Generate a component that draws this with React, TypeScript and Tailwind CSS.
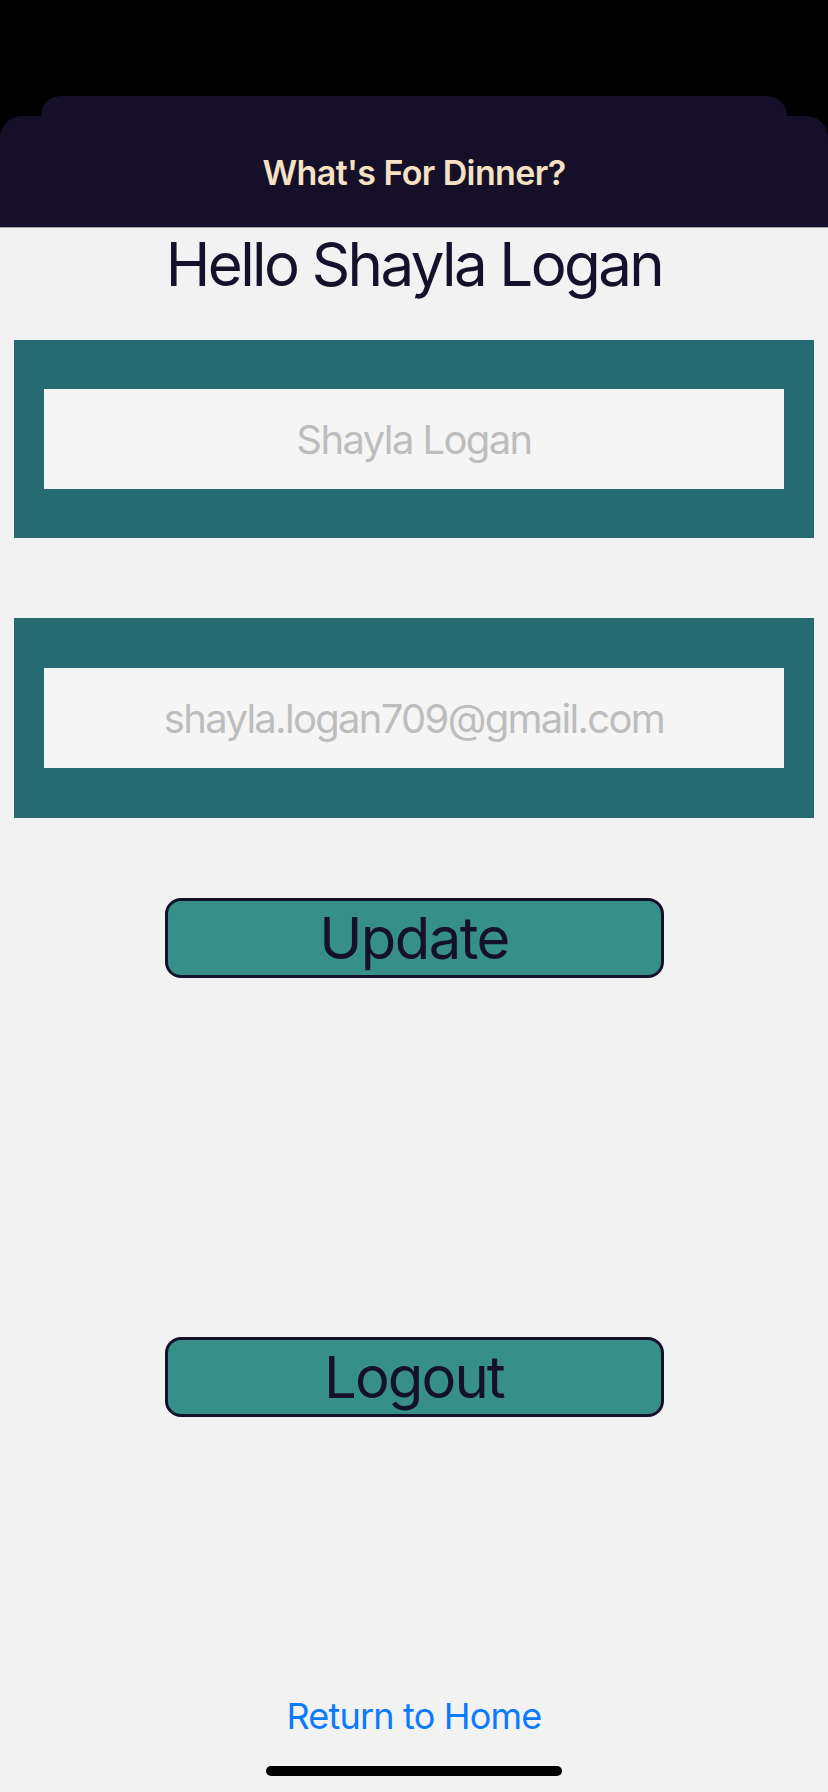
export default function App() {
  return (
    <div className="min-h-[1792px] w-[828px] bg-[#f2f2f2] flex flex-col font-['Inter',sans-serif]">
      {/* header with stacked sheet */}
      <div className="bg-black pt-[96px]">
        <div className="mx-[41px] h-[20px] rounded-t-[20px] bg-[#150f2a]" />
        <div className="h-[112px] rounded-t-[22px] bg-[#150f2a] border-b border-[#a6a6ad] flex items-center justify-center">
          <span className="text-[34px] font-semibold text-[#f6e1c3] tracking-[-0.6px] mt-[1px]">What's For Dinner?</span>
        </div>
      </div>

      <h1 className="text-center text-[60px] leading-[72px] text-[#16112b] tracking-[-2.6px]">Hello Shayla Logan</h1>

      <div className="mt-[40px] mx-[14px] bg-[#256b71] px-[30px] py-[49px]">
        <input
          className="w-full h-[100px] bg-[#f5f5f5] text-center text-[40px] text-[#16112b] placeholder:text-[#bdbdbd] outline-none tracking-[-1.6px]"
          placeholder="Shayla Logan"
        />
      </div>

      <div className="mt-[80px] mx-[14px] bg-[#256b71] px-[30px] py-[50px]">
        <input
          className="w-full h-[100px] bg-[#f5f5f5] text-center text-[40px] text-[#16112b] placeholder:text-[#bdbdbd] outline-none tracking-[-1.7px]"
          placeholder="shayla.logan709@gmail.com"
        />
      </div>

      <div className="flex flex-col items-center">
        <button className="mt-[80px] w-[499px] h-[80px] rounded-[16px] border-[3px] border-[#16112b] bg-[#378f8a] text-[58px] leading-none text-[#16112b] tracking-[-1.6px] flex items-center justify-center">
          Update
        </button>
        <button className="mt-[359px] w-[499px] h-[80px] rounded-[16px] border-[3px] border-[#16112b] bg-[#378f8a] text-[58px] leading-none text-[#16112b] tracking-[-1.9px] flex items-center justify-center">
          Logout
        </button>
        <a className="mt-[272px] text-[36px] text-[#0a7aff] tracking-[-0.8px]">Return to Home</a>
        <div className="mt-[23px] w-[296px] h-[10px] rounded-full bg-black" />
      </div>
    </div>
  );
}
